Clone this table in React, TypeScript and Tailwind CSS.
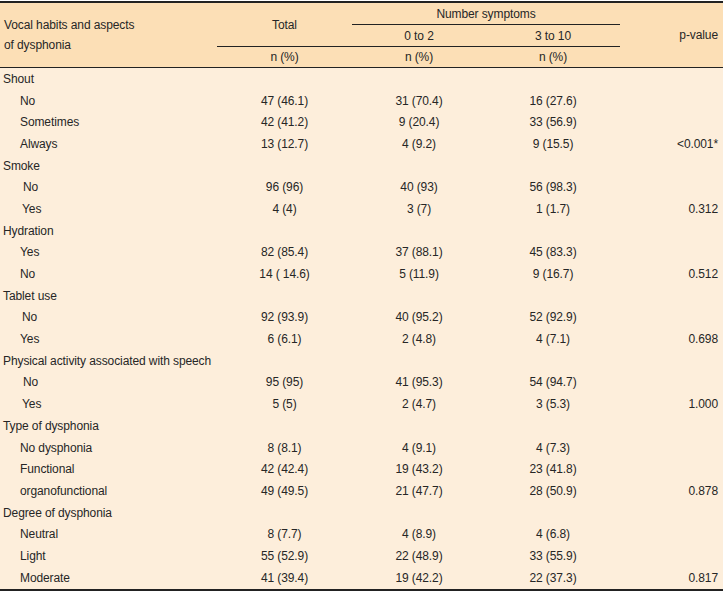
const font = { fontFamily: '"Liberation Sans", Arial, sans-serif' }

type Row =
  | { kind: 'group'; label: string }
  | { kind: 'item'; label: string; total: string; low: string; high: string; p?: string; indent?: number }

const rows: Row[] = [
  { kind: 'group', label: 'Shout' },
  { kind: 'item', label: 'No', total: '47 (46.1)', low: '31 (70.4)', high: '16 (27.6)' },
  { kind: 'item', label: 'Sometimes', total: '42 (41.2)', low: '9 (20.4)', high: '33 (56.9)' },
  { kind: 'item', label: 'Always', total: '13 (12.7)', low: '4 (9.2)', high: '9 (15.5)', p: '<0.001*' },
  { kind: 'group', label: 'Smoke' },
  { kind: 'item', label: 'No', total: '96 (96)', low: '40 (93)', high: '56 (98.3)', indent: 23 },
  { kind: 'item', label: 'Yes', total: '4 (4)', low: '3 (7)', high: '1 (1.7)', p: '0.312', indent: 22 },
  { kind: 'group', label: 'Hydration' },
  { kind: 'item', label: 'Yes', total: '82 (85.4)', low: '37 (88.1)', high: '45 (83.3)' },
  { kind: 'item', label: 'No', total: '14 ( 14.6)', low: '5 (11.9)', high: '9 (16.7)', p: '0.512' },
  { kind: 'group', label: 'Tablet use' },
  { kind: 'item', label: 'No', total: '92 (93.9)', low: '40 (95.2)', high: '52 (92.9)', indent: 22 },
  { kind: 'item', label: 'Yes', total: '6 (6.1)', low: '2 (4.8)', high: '4 (7.1)', p: '0.698' },
  { kind: 'group', label: 'Physical activity associated with speech' },
  { kind: 'item', label: 'No', total: '95 (95)', low: '41 (95.3)', high: '54 (94.7)', indent: 23 },
  { kind: 'item', label: 'Yes', total: '5 (5)', low: '2 (4.7)', high: '3 (5.3)', p: '1.000', indent: 22 },
  { kind: 'group', label: 'Type of dysphonia' },
  { kind: 'item', label: 'No dysphonia', total: '8 (8.1)', low: '4 (9.1)', high: '4 (7.3)' },
  { kind: 'item', label: 'Functional', total: '42 (42.4)', low: '19 (43.2)', high: '23 (41.8)' },
  { kind: 'item', label: 'organofunctional', total: '49 (49.5)', low: '21 (47.7)', high: '28 (50.9)', p: '0.878' },
  { kind: 'group', label: 'Degree of dysphonia' },
  { kind: 'item', label: 'Neutral', total: '8 (7.7)', low: '4 (8.9)', high: '4 (6.8)' },
  { kind: 'item', label: 'Light', total: '55 (52.9)', low: '22 (48.9)', high: '33 (55.9)' },
  { kind: 'item', label: 'Moderate', total: '41 (39.4)', low: '19 (42.2)', high: '22 (37.3)', p: '0.817' },
]

const cols = 'grid grid-cols-[217px_135px_134px_134px_103px]'

export default function App() {
  return (
    <div className="min-h-screen w-[723px] bg-white pt-[1px] text-[12px] tracking-[-0.1px] text-[#262626]" style={font}>
      <div className="border-t-2 border-b-2 border-[#222]">
        {/* header */}
        <div className={`${cols} grid-rows-[22px_22px_20px] border-b border-[#222] bg-[#fcdfb6]`}>
          <div className="row-span-3 flex items-center pl-[4px] leading-[20px]">
            Vocal habits and aspects
            <br />
            of dysphonia
          </div>
          <div className="row-span-2 flex items-center justify-center border-b border-[#222]">Total</div>
          <div className="col-span-2 flex items-center justify-center border-b border-[#222]">Number symptoms</div>
          <div className="row-span-3 flex items-center justify-end pr-[5px]">p-value</div>
          <div className="flex items-center justify-center border-b border-[#222]">0 to 2</div>
          <div className="flex items-center justify-center border-b border-[#222]">3 to 10</div>
          <div className="flex items-center justify-center">n (%)</div>
          <div className="flex items-center justify-center">n (%)</div>
          <div className="flex items-center justify-center">n (%)</div>
        </div>

        {/* body */}
        <div className="bg-[#fdeedb]">
          {rows.map((r, i) =>
            r.kind === 'group' ? (
              <div key={i} className="flex h-[21.7px] items-center pl-[3px]">
                {r.label}
              </div>
            ) : (
              <div key={i} className={`${cols} h-[21.7px] items-center`}>
                <div style={{ paddingLeft: r.indent ?? 20 }}>{r.label}</div>
                <div className="text-center">{r.total}</div>
                <div className="text-center">{r.low}</div>
                <div className="text-center">{r.high}</div>
                <div className="pr-[5px] text-right">{r.p ?? ''}</div>
              </div>
            ),
          )}
        </div>
      </div>
    </div>
  )
}
